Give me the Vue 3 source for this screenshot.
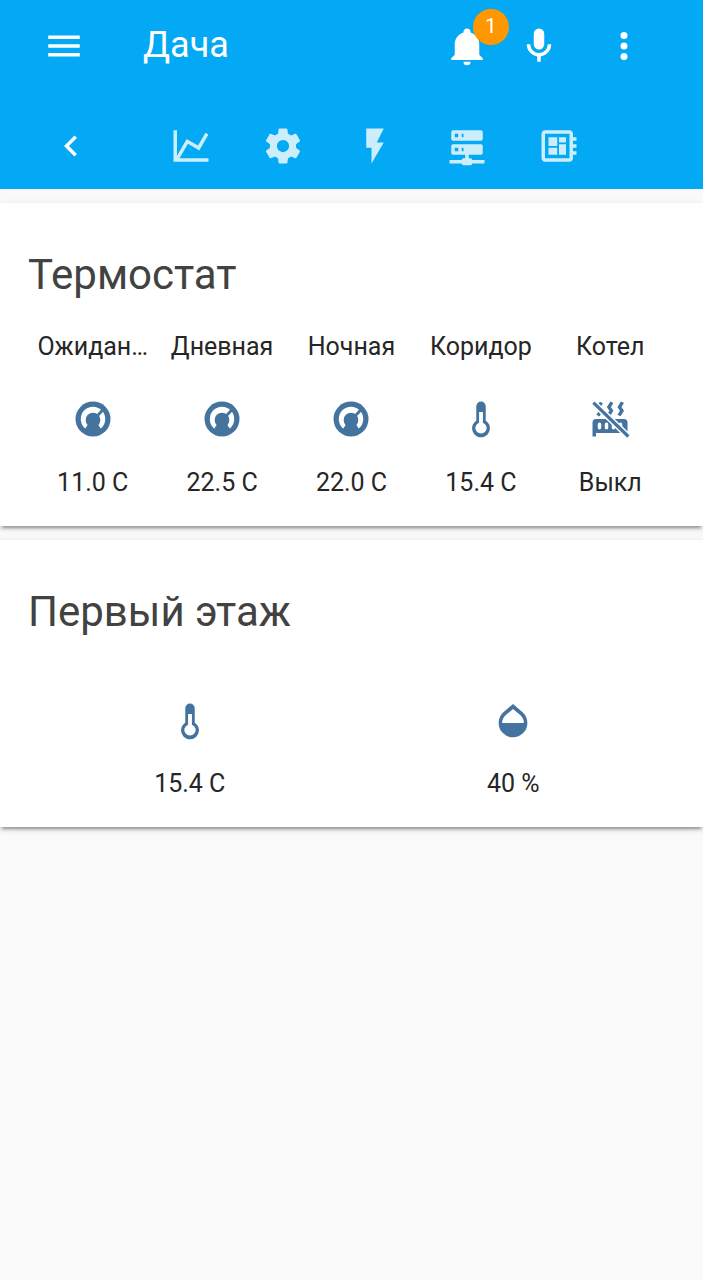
<script setup>
const icons = {
  menu: 'M3,6H21V8H3V6M3,11H21V13H3V11M3,16H21V18H3V16Z',
  bell: 'M21,19V20H3V19L5,17V11C5,7.9 7.03,5.17 10,4.29C10,4.19 10,4.1 10,4A2,2 0 0,1 12,2A2,2 0 0,1 14,4C14,4.1 14,4.19 14,4.29C16.97,5.17 19,7.9 19,11V17L21,19M14,21A2,2 0 0,1 12,23A2,2 0 0,1 10,21',
  mic: 'M12,2A3,3 0 0,1 15,5V11A3,3 0 0,1 12,14A3,3 0 0,1 9,11V5A3,3 0 0,1 12,2M19,11C19,14.53 16.39,17.44 13,17.93V21H11V17.93C7.61,17.44 5,14.53 5,11H7A5,5 0 0,0 12,16A5,5 0 0,0 17,11H19Z',
  dots: 'M12,16A2,2 0 0,1 14,18A2,2 0 0,1 12,20A2,2 0 0,1 10,18A2,2 0 0,1 12,16M12,10A2,2 0 0,1 14,12A2,2 0 0,1 12,14A2,2 0 0,1 10,12A2,2 0 0,1 12,10M12,4A2,2 0 0,1 14,6A2,2 0 0,1 12,8A2,2 0 0,1 10,6A2,2 0 0,1 12,4Z',
  chevron: 'M15.41,16.58L10.83,12L15.41,7.41L14,6L8,12L14,18L15.41,16.58Z',
  chart: 'M16,11.78L20.24,4.45L21.97,5.45L16.74,14.5L10.23,10.75L5.46,19H22V21H2V3H4V17.54L9.5,8L16,11.78Z',
  cog: 'M12,15.5A3.5,3.5 0 0,1 8.5,12A3.5,3.5 0 0,1 12,8.5A3.5,3.5 0 0,1 15.5,12A3.5,3.5 0 0,1 12,15.5M19.43,12.97C19.47,12.65 19.5,12.33 19.5,12C19.5,11.67 19.47,11.34 19.43,11L21.54,9.37C21.73,9.22 21.78,8.95 21.66,8.73L19.66,5.27C19.54,5.05 19.27,4.96 19.05,5.05L16.56,6.05C16.04,5.66 15.5,5.32 14.87,5.07L14.5,2.42C14.46,2.18 14.25,2 14,2H10C9.75,2 9.54,2.18 9.5,2.42L9.13,5.07C8.5,5.32 7.96,5.66 7.44,6.05L4.95,5.05C4.73,4.96 4.46,5.05 4.34,5.27L2.34,8.73C2.21,8.95 2.27,9.22 2.46,9.37L4.57,11C4.53,11.34 4.5,11.67 4.5,12C4.5,12.33 4.53,12.65 4.57,12.97L2.46,14.63C2.27,14.78 2.21,15.05 2.34,15.27L4.34,18.73C4.46,18.95 4.73,19.03 4.95,18.95L7.44,17.94C7.96,18.34 8.5,18.68 9.13,18.93L9.5,21.58C9.54,21.82 9.75,22 10,22H14C14.25,22 14.46,21.82 14.5,21.58L14.87,18.93C15.5,18.67 16.04,18.34 16.56,17.94L19.05,18.95C19.27,19.03 19.54,18.95 19.66,18.73L21.66,15.27C21.78,15.05 21.73,14.78 21.54,14.63L19.43,12.97Z',
  flash: 'M7,2V13H10V22L17,10H13L17,2H7Z',
  server: 'M13,19H14A1,1 0 0,1 15,20H22V22H15A1,1 0 0,1 14,23H10A1,1 0 0,1 9,22H2V20H9A1,1 0 0,1 10,19H11V17H4A1,1 0 0,1 3,16V12A1,1 0 0,1 4,11H20A1,1 0 0,1 21,12V16A1,1 0 0,1 20,17H13V19M4,3H20A1,1 0 0,1 21,4V8A1,1 0 0,1 20,9H4A1,1 0 0,1 3,8V4A1,1 0 0,1 4,3M9,7H10V5H9V7M9,15H10V13H9V15M5,5V7H7V5H5M5,13V15H7V13H5Z',
  board: 'M22 9V7h-2V5c0-1.1-.9-2-2-2H4c-1.1 0-2 .9-2 2v14c0 1.1.9 2 2 2h14c1.1 0 2-.9 2-2v-2h2v-2h-2v-2h2v-2h-2V9h2zm-4 10H4V5h14v14zM6 13h5v4H6zm6-6h4v3h-4zM6 7h5v5H6zm6 4h4v6h-4z',
  radiator: 'M7.95,3L6.53,5.19L7.95,7.4H7.94L5.95,10.5L4.22,9.6L5.64,7.39L4.22,5.19L6.22,2.09L7.95,3M13.95,2.89L12.53,5.1L13.95,7.3L13.94,7.31L11.95,10.4L10.22,9.5L11.64,7.3L10.22,5.1L12.22,2L13.95,2.89M20,2.89L18.56,5.1L20,7.3V7.31L18,10.4L16.25,9.5L17.67,7.3L16.25,5.1L18.25,2L20,2.89M2,22V14A2,2 0 0,1 4,12H20A2,2 0 0,1 22,14V22H20V20H4V22H2M6,14A1,1 0 0,0 5,15V17A1,1 0 0,0 6,18A1,1 0 0,0 7,17V15A1,1 0 0,0 6,14M10,14A1,1 0 0,0 9,15V17A1,1 0 0,0 10,18A1,1 0 0,0 11,17V15A1,1 0 0,0 10,14M14,14A1,1 0 0,0 13,15V17A1,1 0 0,0 14,18A1,1 0 0,0 15,17V15A1,1 0 0,0 14,14M18,14A1,1 0 0,0 17,15V17A1,1 0 0,0 18,18A1,1 0 0,0 19,17V15A1,1 0 0,0 18,14Z',
}

const tabs = ['chart', 'cog', 'flash', 'server', 'board']

const thermostat = [
  { label: 'Ожидан…', icon: 'gauge', value: '11.0 C' },
  { label: 'Дневная', icon: 'gauge', value: '22.5 C' },
  { label: 'Ночная', icon: 'gauge', value: '22.0 C' },
  { label: 'Коридор', icon: 'thermo', value: '15.4 C' },
  { label: 'Котел', icon: 'radiator', value: 'Выкл' },
]

const firstFloor = [
  { icon: 'thermo', value: '15.4 C' },
  { icon: 'drop', value: '40 %' },
]

const cards = [
  { title: 'Термостат', items: thermostat, cols: 'five' },
  { title: 'Первый этаж', items: firstFloor, cols: 'two' },
]
</script>

<template>
  <div class="page">
    <header class="header">
      <div class="toolbar">
        <svg class="icon menu" viewBox="0 0 24 24"><path :d="icons.menu" /></svg>
        <div class="title">Дача</div>
        <div class="bell">
          <svg class="icon" viewBox="0 0 24 24"><path :d="icons.bell" /></svg>
          <span class="badge">1</span>
        </div>
        <svg class="icon mic" viewBox="0 0 24 24"><path :d="icons.mic" /></svg>
        <svg class="icon dots" viewBox="0 0 24 24"><path :d="icons.dots" /></svg>
      </div>
      <div class="tabs">
        <svg class="icon back" viewBox="0 0 24 24"><path :d="icons.chevron" /></svg>
        <svg v-for="t in tabs" :key="t" class="icon tab" viewBox="0 0 24 24"><path :d="icons[t]" /></svg>
      </div>
    </header>

    <main class="content">
      <section v-for="card in cards" :key="card.title" class="card" :class="card.cols">
        <h2 class="card-title">{{ card.title }}</h2>
        <div class="grid">
          <div v-for="(item, i) in card.items" :key="i" class="item">
            <div v-if="item.label" class="label">{{ item.label }}</div>
            <svg class="state" viewBox="0 0 24 24">
              <g v-if="item.icon === 'gauge'">
                <circle cx="12" cy="12" r="10" />
                <circle cx="12" cy="12" r="7" fill="#fff" />
                <circle cx="12" cy="12.6" r="4.2" />
                <path d="M9.2 15 6.2 19.5H17.8L14.8 15Z" />
                <path d="M12.6 11.2 17.9 5.2 19.2 6.4 13.6 12.2Z" />
              </g>
              <path
                v-else-if="item.icon === 'thermo'"
                fill-rule="evenodd"
                d="M14.7 13V4.7A2.7 2.7 0 0 0 9.3 4.7V13A5.1 5.1 0 1 0 14.7 13ZM10.9 8H13.1V14.1A3.2 3.2 0 1 1 10.9 14.1Z"
              />
              <g v-else-if="item.icon === 'radiator'">
                <path :d="icons.radiator" />
                <path d="M2.5 2.7 22.5 22" stroke="#fff" stroke-width="3.6" fill="none" />
                <path d="M2.5 2.7 22.5 22" stroke="#44739e" stroke-width="1.8" fill="none" />
              </g>
              <path
                v-else
                fill-rule="evenodd"
                d="M12 2.3 17.8 7.3A8.2 8.2 0 1 1 6.2 7.3ZM12 5.2 16.3 8.7A6.2 6.2 0 0 1 18.2 13.1H5.8A6.2 6.2 0 0 1 7.7 8.7Z"
              />
            </svg>
            <div class="value">{{ item.value }}</div>
          </div>
        </div>
      </section>
    </main>
  </div>
</template>

<style>
html,
body {
  margin: 0;
  background: #fafafa;
}
</style>

<style scoped>
.page {
  min-height: 1280px;
  background: #fafafa;
  font-family: Roboto, "Liberation Sans", sans-serif;
}

.header {
  height: 189px;
  background: #03a9f4;
  color: #fff;
}

.icon {
  display: block;
  width: 42px;
  height: 42px;
  fill: currentColor;
  flex: none;
}

.toolbar {
  display: flex;
  align-items: center;
  height: 92px;
  padding-left: 43px;
}

.title {
  margin-left: 58px;
  padding-bottom: 2px;
  font-size: 36px;
  width: 303px;
  flex: none;
}

.bell {
  position: relative;
  width: 42px;
  height: 42px;
}

.badge {
  position: absolute;
  left: 27px;
  top: -16px;
  width: 36px;
  height: 36px;
  border-radius: 50%;
  background: #ff9800;
  font-size: 21px;
  line-height: 35px;
  text-align: center;
}

.mic {
  margin-left: 30px;
}

.dots {
  margin-left: 43px;
}

.tabs {
  display: flex;
  align-items: center;
  height: 84px;
  margin-top: 12px;
  padding-left: 50px;
}

.back {
  margin-right: 78px;
}

.tab {
  margin-right: 50px;
  opacity: 0.8;
}

.content {
  display: flex;
  flex-direction: column;
  gap: 14px;
  padding-top: 14px;
}

.card {
  background: #fff;
  box-shadow: 0 3px 3px rgba(0, 0, 0, 0.14), 0 2px 8px rgba(0, 0, 0, 0.12), 0 5px 2px -3px rgba(0, 0, 0, 0.2);
  padding: 0 28px;
}

.card-title {
  margin: 0;
  padding-top: 44px;
  height: 56px;
  font-size: 42px;
  line-height: 56px;
  font-weight: 400;
  color: #424242;
}

.grid {
  display: grid;
}

.five .grid {
  grid-template-columns: repeat(5, 1fr);
  height: 197px;
  padding-top: 26px;
}

.two .grid {
  grid-template-columns: repeat(2, 1fr);
  height: 127px;
  padding-top: 60px;
}

.item {
  display: flex;
  flex-direction: column;
  align-items: center;
  min-width: 0;
  color: #262626;
  font-size: 25px;
}

.label {
  height: 36px;
  line-height: 36px;
  white-space: nowrap;
}

.state {
  display: block;
  width: 42px;
  height: 42px;
  fill: #44739e;
}

.five .state {
  margin-top: 33px;
}

.value {
  height: 36px;
  line-height: 36px;
  margin-top: 24px;
}

.five .value {
  margin-top: 25px;
}
</style>
